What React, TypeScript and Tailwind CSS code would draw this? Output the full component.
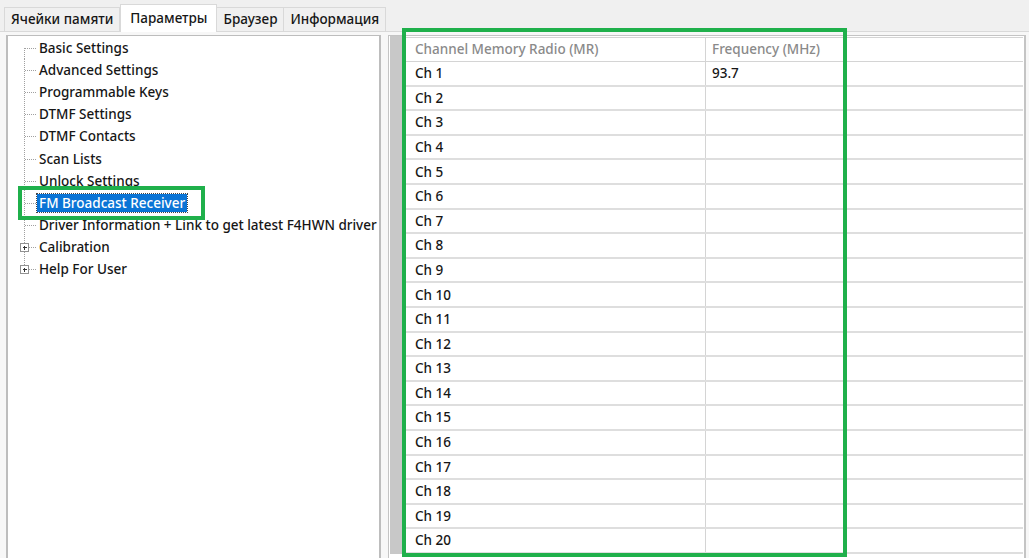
import React from "react";

const treeItems: { label: string; expandable?: boolean; selected?: boolean }[] = [
  { label: "Basic Settings" },
  { label: "Advanced Settings" },
  { label: "Programmable Keys" },
  { label: "DTMF Settings" },
  { label: "DTMF Contacts" },
  { label: "Scan Lists" },
  { label: "Unlock Settings" },
  { label: "FM Broadcast Receiver", selected: true },
  { label: "Driver Information + Link to get latest F4HWN driver" },
  { label: "Calibration", expandable: true },
  { label: "Help For User", expandable: true },
];

const tabs = ["Ячейки памяти", "Параметры", "Браузер", "Информация"];

const channels = Array.from({ length: 20 }, (_, i) => ({
  name: `Ch ${i + 1}`,
  freq: i === 0 ? "93.7" : "",
}));

function Connector({ first, last, expandable }: { first: boolean; last: boolean; expandable?: boolean }) {
  // dotted tree lines drawn in a 31px cell; the trunk sits at x=16
  return (
    <svg width="31" height="22" className="shrink-0 block" shapeRendering="crispEdges">
      <line
        x1="16.5"
        x2="16.5"
        y1={first ? 11 : 0}
        y2={last ? 11 : 22}
        stroke="#a0a0a0"
        strokeDasharray="1 1"
      />
      <line x1="17" x2="29" y1="11.5" y2="11.5" stroke="#a0a0a0" strokeDasharray="1 1" />
      {expandable && (
        <g>
          <rect x="12.5" y="7.5" width="8" height="8" fill="#fff" stroke="#919191" />
          <line x1="14.5" x2="19" y1="11.5" y2="11.5" stroke="#333" />
          <line x1="16.5" x2="16.5" y1="9.5" y2="14" stroke="#333" />
        </g>
      )}
    </svg>
  );
}

export default function App() {
  return (
    <div
      className="relative w-[1029px] h-[558px] overflow-hidden bg-[#f0f0f0] text-[#161616]"
      style={{ fontFamily: '"Noto Sans", "Open Sans", sans-serif' }}
    >
      {/* tab strip */}
      <div className="flex items-end h-[32px] pl-[4px] border-b border-[#d9d9d9]">
        {tabs.map((t, i) => {
          const active = i === 1;
          return (
            <div
              key={t}
              className={
                active
                  ? "h-[28px] px-[9px] flex items-center bg-white border border-b-0 border-[#d9d9d9] text-[13.5px] font-medium -mb-px"
                  : "h-[24px] px-[6px] flex items-center bg-[#f0f0f0] border border-b-0 border-[#d9d9d9] text-[13.5px] font-medium -ml-px first:ml-0"
              }
            >
              {t}
            </div>
          );
        })}
      </div>

      {/* tab page */}
      <div className="flex h-[526px] pl-[6px] pt-[3px] bg-[#f7f7f7]">
        {/* tree */}
        <div className="w-[375px] h-full bg-white border-x-2 border-t border-[#bdbdbd]">
          <div className="pt-[1px]">
            {treeItems.map((it, i) => (
              <div key={it.label} className="flex items-center h-[22.1px]">
                <Connector first={i === 0} last={i === treeItems.length - 1} expandable={it.expandable} />
                <span
                  className={
                    it.selected
                      ? "text-[13.5px] font-medium leading-[18px] px-[2px] bg-[#0a74d6] text-white outline outline-1 outline-dotted outline-[#444] -ml-[2px]"
                      : "text-[13.5px] font-medium leading-[18px] whitespace-nowrap"
                  }
                >
                  {it.label}
                </span>
              </div>
            ))}
          </div>
        </div>

        {/* splitter gap */}
        <div className="w-[7px] shrink-0" />

        {/* grid */}
        <div className="flex-1 h-full bg-white border-l border-t border-r-2 border-[#c4c4c4] flex mr-[3px]">
          <div className="w-[13px] ml-[1px] h-[518px] bg-[#c8c8c8] shrink-0" />
          <div className="flex-1 flex flex-col pt-[1px] pr-[1px]">
            <div className="flex h-[25px] border-y border-[#d4d4d4] text-[#8a8a8a] text-[13.5px] font-medium">
              <div className="w-[303px] pl-[12px] flex items-center border-r border-[#d4d4d4]">
                Channel Memory Radio (MR)
              </div>
              <div className="w-[138px] pl-[6px] flex items-center border-r border-[#d4d4d4]">Frequency (MHz)</div>
              <div className="flex-1" />
            </div>
            {channels.map((c) => (
              <div key={c.name} className="flex h-[24.6px] border-b-2 border-[#dedede] text-[13.5px] font-medium">
                <div className="w-[303px] pl-[12px] flex items-center border-r border-[#d4d4d4]">{c.name}</div>
                <div className="w-[138px] pl-[6px] flex items-center border-r border-[#d4d4d4]">{c.freq}</div>
                <div className="flex-1" />
              </div>
            ))}
          </div>
        </div>
      </div>

      {/* highlight frames */}
      <div className="absolute left-[18px] top-[186px] w-[187px] h-[34px] border-[4px] border-[#1fb04b] pointer-events-none" />
      <div className="absolute left-[402px] top-[28px] w-[445px] h-[529px] border-[4px] border-[#1fb04b] pointer-events-none" />
    </div>
  );
}
